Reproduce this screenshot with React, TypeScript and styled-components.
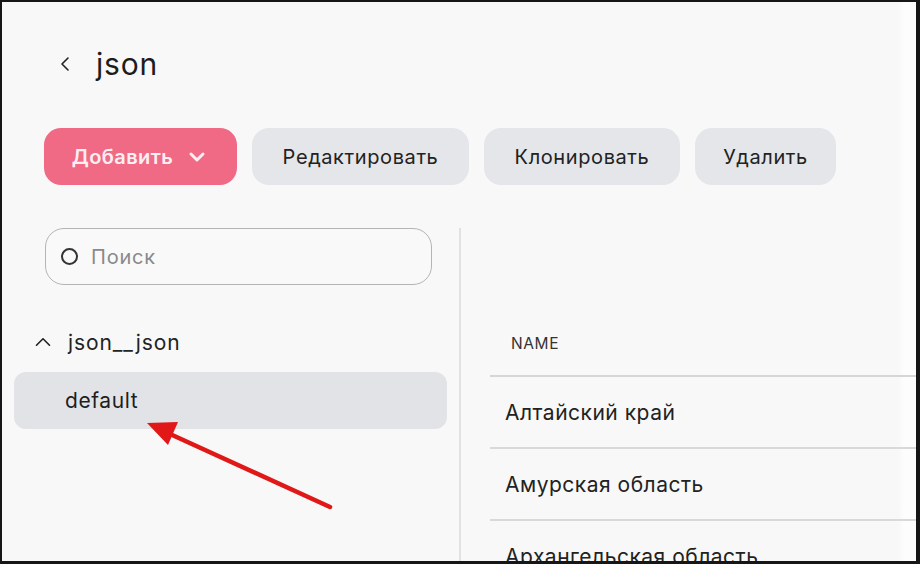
import React from 'react';
import styled, { createGlobalStyle } from 'styled-components';
import { ChevronLeft, ChevronDown, ChevronUp } from 'lucide-react';

const GlobalStyle = createGlobalStyle`
  html, body {
    margin: 0;
    padding: 0;
    background: #111;
  }
  * {
    box-sizing: border-box;
  }
`;

const Frame = styled.div`
  width: 920px;
  height: 564px;
  border-style: solid;
  border-color: #161616;
  border-width: 2px 4px 3px 2px;
  background: linear-gradient(to right, #f8f8f8 0, #f8f8f8 896px, #fdfdfd 902px);
  overflow: hidden;
  position: relative;
  font-family: Inter, 'Noto Sans', sans-serif;
  color: #222;
`;

const Header = styled.div`
  display: flex;
  align-items: center;
  height: 60px;
  margin-top: 32px;
  padding-left: 51px;
  gap: 19px;
`;

const Title = styled.h1`
  margin: 0;
  font-size: 30px;
  font-weight: 400;
  color: #1d1d1d;
  letter-spacing: 0.8px;
`;

const Toolbar = styled.div`
  display: flex;
  gap: 15px;
  margin-top: 34px;
  padding-left: 42px;
`;

const Button = styled.button<{ $primary?: boolean; $w: number }>`
  height: 57px;
  width: ${(p) => p.$w}px;
  border: none;
  border-radius: 17px;
  font-family: inherit;
  font-size: 20px;
  letter-spacing: ${(p) => (p.$primary ? '0.4px' : '0.6px')};
  font-weight: ${(p) => (p.$primary ? 600 : 400)};
  background: ${(p) => (p.$primary ? '#f06a86' : '#e5e6ea')};
  color: ${(p) => (p.$primary ? '#fdeef2' : '#222')};
  display: flex;
  align-items: center;
  justify-content: center;
  gap: 12px;
  padding: 0;
`;

const Body = styled.div`
  display: flex;
  margin-top: 43px;
  height: 340px;
`;

const Left = styled.div`
  width: 445px;
  padding-left: 12px;
  display: flex;
  flex-direction: column;
`;

const Search = styled.div`
  margin-left: 31px;
  width: 387px;
  height: 57px;
  border: 1px solid #b4b4b4;
  border-radius: 19px;
  display: flex;
  align-items: center;
  padding-left: 15px;
  gap: 13px;
  color: #8a8a8a;
  font-size: 20px;
  letter-spacing: 0.8px;
  background: #f9f9f9;
`;

const Ring = styled.span`
  width: 17px;
  height: 17px;
  border: 2px solid #333;
  border-radius: 50%;
`;

const Group = styled.div`
  display: flex;
  align-items: center;
  gap: 12px;
  margin-top: 42px;
  padding-left: 16px;
  font-size: 21px;
  letter-spacing: 0.9px;
  color: #222;
  height: 30px;
`;

const Item = styled.div`
  margin-top: 15px;
  height: 57px;
  border-radius: 12px;
  background: #e2e3e7;
  display: flex;
  align-items: center;
  padding-left: 51px;
  font-size: 21px;
  letter-spacing: 0.6px;
  color: #1e1e1e;
`;

const Divider = styled.div`
  width: 2px;
  background: #e1e1e1;
  margin-left: 12px;
`;

const Right = styled.div`
  flex: 1;
  margin-left: 29px;
  padding-top: 76px;
`;

const HeadRow = styled.div`
  height: 73px;
  display: flex;
  align-items: center;
  padding-left: 21px;
  padding-top: 8px;
  font-size: 15.5px;
  letter-spacing: 0.6px;
  color: #333;
  border-bottom: 2px solid #d6d6d6;
`;

const Row = styled.div`
  height: 72px;
  display: flex;
  align-items: center;
  padding-left: 15px;
  font-size: 21px;
  letter-spacing: 0.5px;
  color: #222;
  border-bottom: 2px solid #d9d9d9;
`;

const Arrow = styled.svg`
  position: absolute;
  left: 0;
  top: 0;
  pointer-events: none;
`;

const regions = ['Алтайский край', 'Амурская область', 'Архангельская область'];

export default function App() {
  return (
    <>
      <GlobalStyle />
      <Frame>
        <Header>
          <ChevronLeft size={24} strokeWidth={1.6} color="#222" />
          <Title>json</Title>
        </Header>
        <Toolbar>
          <Button $primary $w={193}>
            Добавить
            <ChevronDown size={24} strokeWidth={3} />
          </Button>
          <Button $w={217}>Редактировать</Button>
          <Button $w={196}>Клонировать</Button>
          <Button $w={141}>Удалить</Button>
        </Toolbar>
        <Body>
          <Left>
            <Search>
              <Ring />
              Поиск
            </Search>
            <Group>
              <ChevronUp size={26} strokeWidth={1.5} />
              json__json
            </Group>
            <Item>default</Item>
          </Left>
          <Divider />
          <Right>
            <HeadRow>NAME</HeadRow>
            {regions.map((r) => (
              <Row key={r}>{r}</Row>
            ))}
          </Right>
        </Body>
        <Arrow width="920" height="564" viewBox="0 0 920 564">
          <line x1="328" y1="505" x2="168" y2="432" stroke="#e01818" strokeWidth="4.5" strokeLinecap="round" />
          <polygon points="145,421 176,420 166,443" fill="#e01818" />
        </Arrow>
      </Frame>
    </>
  );
}
